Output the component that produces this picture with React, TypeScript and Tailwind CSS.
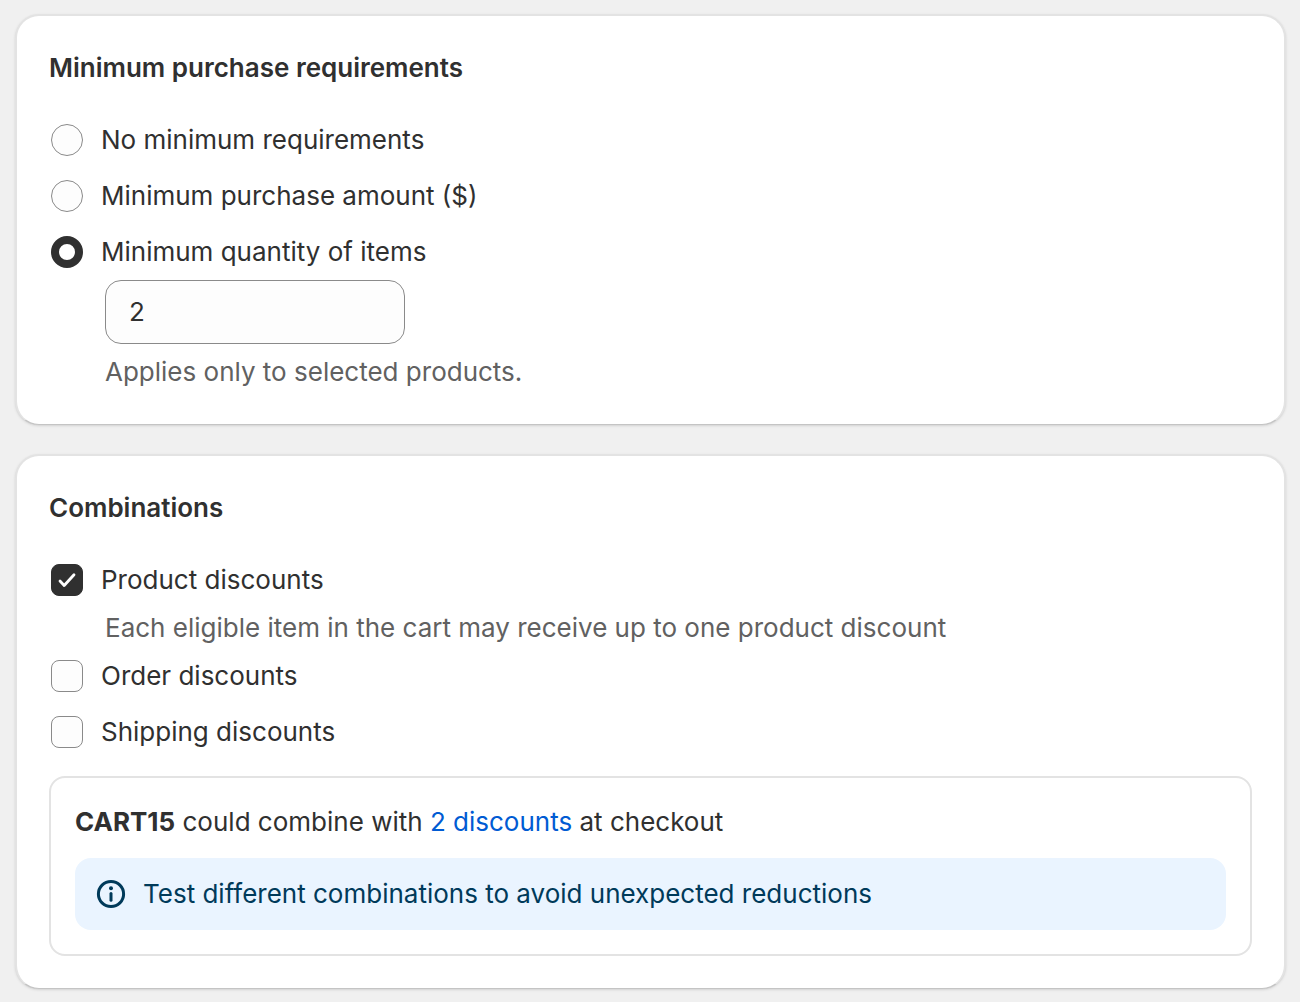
import { useState } from 'react'
import type { ReactNode } from 'react'

const requirements = [
  { id: 'none', label: 'No minimum requirements' },
  { id: 'amount', label: 'Minimum purchase amount ($)' },
  { id: 'quantity', label: 'Minimum quantity of items' },
]

function Card({ title, children }: { title: string; children: ReactNode }) {
  return (
    <section className="rounded-3xl border-2 border-b border-[#e3e3e3] border-b-[#c4c4c4] bg-white px-8 pt-8 pb-8 shadow-sm">
      <h2 className="mb-8 text-[26px] leading-10 font-semibold">{title}</h2>
      {children}
    </section>
  )
}

function Radio({ id, label, checked, onChange }: { id: string; label: string; checked: boolean; onChange: () => void }) {
  return (
    <label className="flex h-14 items-center gap-[18px] pl-0.5">
      <input
        type="radio"
        name="requirement"
        value={id}
        checked={checked}
        onChange={onChange}
        className="size-8 shrink-0 appearance-none rounded-full border border-[#8a8a8a] bg-[#fdfdfd] checked:border-8 checked:border-[#303030] checked:bg-white"
      />
      {label}
    </label>
  )
}

function Checkbox({ label, checked, onChange }: { label: string; checked: boolean; onChange: () => void }) {
  return (
    <label className="flex h-14 items-center gap-[18px] pl-0.5">
      <span className="grid size-8 shrink-0">
        <input
          type="checkbox"
          checked={checked}
          onChange={onChange}
          className="col-start-1 row-start-1 size-8 appearance-none rounded-lg border border-[#8a8a8a] bg-[#fdfdfd] checked:border-[#303030] checked:bg-[#303030]"
        />
        {checked && (
          <svg viewBox="0 0 32 32" className="pointer-events-none col-start-1 row-start-1 size-8" fill="none" stroke="white" strokeWidth="2.8" strokeLinecap="round" strokeLinejoin="round">
            <path d="M9 17l4.2 4.5L23 10.8" />
          </svg>
        )}
      </span>
      {label}
    </label>
  )
}

export default function App() {
  const [requirement, setRequirement] = useState('quantity')
  const [quantity, setQuantity] = useState('2')
  const [combine, setCombine] = useState({ product: true, order: false, shipping: false })

  const toggle = (key: keyof typeof combine) => setCombine({ ...combine, [key]: !combine[key] })

  return (
    <main className="flex min-h-screen flex-col gap-[29px] bg-[#f0f0f0] pt-3.5 pr-3.5 pb-3 pl-[15px] font-['Inter',sans-serif] text-[26px] leading-10 text-[#303030]">
      <Card title="Minimum purchase requirements">
        <div className="-mt-2">
          {requirements.map((r) => (
            <Radio
              key={r.id}
              id={r.id}
              label={r.label}
              checked={requirement === r.id}
              onChange={() => setRequirement(r.id)}
            />
          ))}
        </div>
        {requirement === 'quantity' && (
          <div className="pl-14">
            <input
              type="text"
              inputMode="numeric"
              aria-label="Minimum quantity"
              value={quantity}
              onChange={(e) => setQuantity(e.target.value)}
              className="block h-16 w-[300px] rounded-2xl border border-[#8a8a8a] bg-[#fdfdfd] px-[23px] pb-0.5"
            />
            <p className="mt-2 text-[#616161]">Applies only to selected products.</p>
          </div>
        )}
      </Card>

      <Card title="Combinations">
        <div className="-mt-2">
          <Checkbox label="Product discounts" checked={combine.product} onChange={() => toggle('product')} />
          <p className="pl-14 text-[#616161]">Each eligible item in the cart may receive up to one product discount</p>
          <Checkbox label="Order discounts" checked={combine.order} onChange={() => toggle('order')} />
          <Checkbox label="Shipping discounts" checked={combine.shipping} onChange={() => toggle('shipping')} />
        </div>

        <div className="mt-4 rounded-2xl border-2 border-[#e3e3e3] p-6">
          <p>
            <strong className="font-bold">CART15</strong> could combine with{' '}
            <a href="#discounts" className="text-[#005bd3]">2 discounts</a> at checkout
          </p>
          <div className="mt-4 flex items-center gap-4 rounded-2xl bg-[#eaf4ff] px-5 py-4 text-[#003a5a]">
            <svg viewBox="0 0 32 32" className="size-8 shrink-0" fill="none" stroke="currentColor" strokeWidth="3" strokeLinecap="round">
              <circle cx="16" cy="16" r="12.6" />
              <path d="M16 15.4v6.8" />
              <circle cx="16" cy="10.2" r="2" fill="currentColor" stroke="none" />
            </svg>
            <p>Test different combinations to avoid unexpected reductions</p>
          </div>
        </div>
      </Card>
    </main>
  )
}
